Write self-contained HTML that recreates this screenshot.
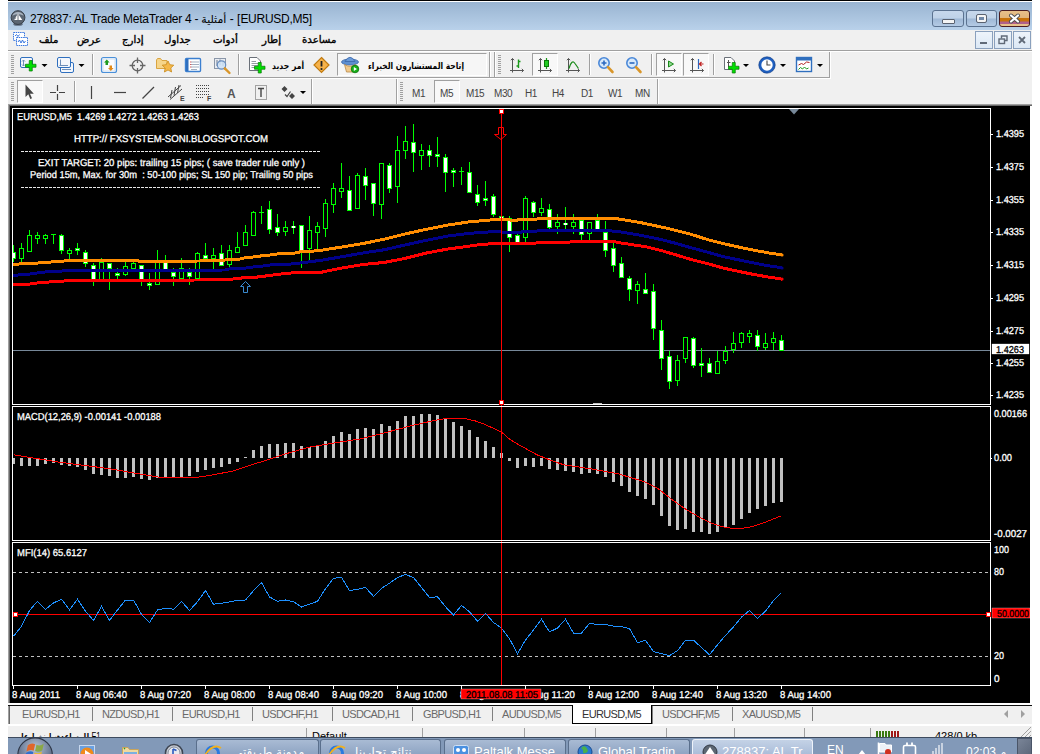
<!DOCTYPE html>
<html><head><meta charset="utf-8"><title>MetaTrader</title>
<style>
html,body{margin:0;padding:0;background:#fff}
body{width:1040px;height:754px;overflow:hidden;position:relative;font-family:"Liberation Sans","DejaVu Sans",sans-serif;font-size:12px}
.a{position:absolute}
.tb{position:absolute;left:8px;width:1024px;background:#f0f0f0}
.sep{position:absolute;width:1px;background:#a0a0a0}
.sep:after{content:"";position:absolute;left:1px;top:0;width:1px;height:100%;background:#fff}
.grip{position:absolute;width:3px;background:repeating-linear-gradient(to bottom,#a0a0a0 0,#a0a0a0 1px,transparent 1px,transparent 2px)}
.press{position:absolute;background:#f8f8f8;border:1px solid;border-color:#a0a0a0 #fff #fff #a0a0a0;box-sizing:border-box}
.tf{position:absolute;top:87px;font-size:10px;letter-spacing:-0.4px;color:#444;line-height:13px;white-space:nowrap}
.mi{-webkit-text-stroke:0.35px #000;position:absolute;top:33px;font-size:10.2px;line-height:14px;color:#000;white-space:nowrap;font-family:"DejaVu Sans","Liberation Sans",sans-serif}
.tab{position:absolute;top:708px;font-size:11px;letter-spacing:-0.65px;line-height:13px;color:#6a6a6a;white-space:nowrap}
.tsep{position:absolute;top:707px;width:1px;height:14px;background:#808080}
.tk{position:absolute;top:740px;height:16px;border:1px solid #5a6f8c;border-bottom:none;border-radius:3px 3px 0 0;background:linear-gradient(#a9bbd4,#8da3c2);box-sizing:border-box;color:#fff;font-size:13px;line-height:24px;white-space:nowrap;overflow:hidden}

</style></head><body>
<div class="a" style="left:8px;top:0;width:1024px;height:1px;background:#000"></div>
<div class="a" style="left:8px;top:2px;width:1024px;height:28px;background:linear-gradient(#99b4d1,#b9d1ea)"></div>
<svg class="a" style="left:10px;top:10px" width="17" height="17" viewBox="0 0 18 18"><ellipse cx="8.5" cy="15" rx="5" ry="1.6" fill="#5d6b7d"/><circle cx="8.5" cy="8" r="7.3" fill="#5c6672" stroke="#333a44" stroke-width="1"/><path d="M2.5,6 A6.5,6.5 0 0 1 14.5,6 Q8.5,3 2.5,6Z" fill="#aab4c0"/><path d="M8.5,4 L13,10.5 H4 Z" fill="#fff"/><path d="M6.5,8 L4.2,10 M8.5,5 V11" stroke="#5c6672" stroke-width="1" fill="none"/></svg>
<div class="a" id="title" style="left:30px;top:11px;font-size:12px;line-height:16px;color:#000;white-space:nowrap;letter-spacing:-0.27px">278837: AL Trade MetaTrader 4 - <span style="font-family:'DejaVu Sans',sans-serif;font-size:11px">أمثلية</span> - [EURUSD,M5]</div>
<!-- caption buttons -->
<div class="a" style="left:932px;top:10px;width:32px;height:17px;border:1px solid #5b7290;border-radius:3px;box-sizing:border-box;background:linear-gradient(#c7d8ec 0,#bfd2e8 48%,#9fb8d6 52%,#b4cae4 100%)"><div class="a" style="left:9px;top:8px;width:11px;height:3px;background:#f4f4f4;border:1px solid #5a6270;border-radius:1px"></div></div>
<div class="a" style="left:966px;top:10px;width:31px;height:17px;border:1px solid #5b7290;border-radius:3px;box-sizing:border-box;background:linear-gradient(#c7d8ec 0,#bfd2e8 48%,#9fb8d6 52%,#b4cae4 100%)"><div class="a" style="left:10px;top:4px;width:5px;height:3px;background:#7088a8;border:2px solid #f4f4f4;outline:1px solid #5a6270;border-radius:1px"></div></div>
<div class="a" style="left:999px;top:10px;width:31px;height:17px;border:1px solid #4a1d22;border-radius:3px;box-sizing:border-box;background:linear-gradient(#e8c08a 0,#e2b57c 45%,#c8720a 48%,#c8720a 68%,#b0608a 72%,#b0608a 86%,#e8c08a 90%)"><svg class="a" style="left:8px;top:2px" width="13" height="11" viewBox="0 0 13 11"><path d="M3,2.5 L10,8.5 M10,2.5 L3,8.5" stroke="#4a4a50" stroke-width="4" stroke-linecap="round"/><path d="M3,2.5 L10,8.5 M10,2.5 L3,8.5" stroke="#fff" stroke-width="2.2" stroke-linecap="round"/></svg></div>
<!-- menu bar -->
<div class="tb" style="top:30px;height:20px"></div>
<svg class="a" style="left:12px;top:31px" width="18" height="16" viewBox="0 0 18 16"><rect x="1.5" y="1.5" width="11" height="8" fill="#fff" stroke="#3b78e0" stroke-dasharray="1.5,0.7"/><rect x="4.5" y="6.5" width="11" height="8" fill="#fff" stroke="#3b78e0" stroke-dasharray="1.5,0.7"/><path d="M6,11 l1.5,-2 1.5,3 1.5,-3 1.5,3 1.5,-2" stroke="#3b78e0" fill="none" stroke-width="1"/><path d="M3,5 l1.5,-1.5 1.5,2 1.5,-2" stroke="#3b78e0" fill="none" stroke-width="1"/></svg>
<div class="mi" style="left:39px">ملف</div>
<div class="mi" style="left:77px">عرض</div>
<div class="mi" style="left:122px">إدارج</div>
<div class="mi" style="left:164px">جداول</div>
<div class="mi" style="left:213px">أدوات</div>
<div class="mi" style="left:262px">إطار</div>
<div class="mi" style="left:302px">مساعدة</div>
<!-- MDI buttons -->
<div class="a" style="left:975px;top:31px;width:18px;height:18px;box-sizing:border-box;border:1px solid #8aa0bd;background:linear-gradient(#eef4fb,#dce8f5)"><div class="a" style="left:4px;top:10px;width:7px;height:2px;background:#606a78"></div></div>
<div class="a" style="left:994px;top:31px;width:18px;height:18px;box-sizing:border-box;border:1px solid #8aa0bd;background:linear-gradient(#eef4fb,#dce8f5)"><svg class="a" style="left:3px;top:3px" width="10" height="10" viewBox="0 0 10 10"><path d="M3.5,3.5 V1 H9 V5.5 H7" stroke="#606a78" fill="none" stroke-width="1.4"/><rect x="1" y="4" width="5.5" height="4.5" fill="none" stroke="#606a78" stroke-width="1.4"/></svg></div>
<div class="a" style="left:1013px;top:31px;width:18px;height:18px;box-sizing:border-box;border:1px solid #8aa0bd;background:linear-gradient(#eef4fb,#dce8f5)"><svg class="a" style="left:4px;top:4px" width="8" height="8" viewBox="0 0 8 8"><path d="M1,1 L7,7 M7,1 L1,7" stroke="#606a78" stroke-width="1.8"/></svg></div>
<!-- toolbars -->
<div class="a" style="left:8px;top:50px;width:1024px;height:1px;background:#a0a0a0"></div>
<div class="a" style="left:8px;top:51px;width:1024px;height:1px;background:#fff"></div>
<div class="tb" style="top:52px;height:27px"></div>
<div class="a" style="left:8px;top:77px;width:822px;height:1px;background:#a0a0a0"></div>
<div class="a" style="left:8px;top:78px;width:823px;height:1px;background:#fff"></div>
<div class="tb" style="top:79px;height:25px"></div>
<div class="a" style="left:8px;top:104px;width:1024px;height:1px;background:#a0a0a0"></div>
<div class="a" style="left:8px;top:105px;width:1024px;height:1px;background:#696969"></div>
<div class="a" style="left:8px;top:104px;width:1px;height:599px;background:#a0a0a0"></div>
<div class="a" style="left:9px;top:105px;width:1px;height:598px;background:#696969"></div>
<div class="grip" style="left:11px;top:55px;height:20px"></div>
<div class="grip" style="left:11px;top:82px;height:20px"></div>
<div class="grip" style="left:498px;top:55px;height:20px"></div>
<div class="grip" style="left:400px;top:82px;height:20px"></div>
<div class="sep" style="left:92px;top:54px;height:21px"></div>
<div class="sep" style="left:238px;top:54px;height:21px"></div>
<div class="sep" style="left:489px;top:52px;height:25px"></div>
<div class="sep" style="left:494px;top:52px;height:25px"></div>
<div class="sep" style="left:589px;top:54px;height:21px"></div>
<div class="sep" style="left:651px;top:54px;height:21px"></div>
<div class="sep" style="left:713px;top:54px;height:21px"></div>
<div class="sep" style="left:829px;top:52px;height:26px"></div>
<div class="sep" style="left:74px;top:81px;height:21px"></div>
<div class="sep" style="left:311px;top:79px;height:25px"></div>
<div class="sep" style="left:396px;top:79px;height:25px"></div>
<div class="sep" style="left:657px;top:79px;height:25px"></div>
<div class="press" style="left:337px;top:53px;width:150px;height:23px;background:#f6f6f6"></div>
<div class="press" style="left:532px;top:53px;width:26px;height:23px"></div>
<div class="press" style="left:656px;top:53px;width:26px;height:23px"></div>
<div class="press" style="left:683px;top:53px;width:26px;height:23px"></div>
<div class="press" style="left:17px;top:80px;width:26px;height:23px"></div>
<div class="press" style="left:434px;top:80px;width:26px;height:23px"></div>
<div class="tf" style="left:412px">M1</div>
<div class="tf" style="left:440px">M5</div>
<div class="tf" style="left:466px">M15</div>
<div class="tf" style="left:494px">M30</div>
<div class="tf" style="left:525px">H1</div>
<div class="tf" style="left:552px">H4</div>
<div class="tf" style="left:581px">D1</div>
<div class="tf" style="left:608px">W1</div>
<div class="tf" style="left:635px">MN</div>
<svg class="a" style="left:0;top:50px" width="1040" height="56" viewBox="0 50 1040 56">
<defs>
<g id="dd"><path d="M0,0 H6 L3,3 Z" fill="#000"/></g>
<g id="plus"><path d="M5,0 H9 V5 H14 V9 H9 V14 H5 V9 H0 V5 H5 Z" fill="#00e000" stroke="#0a7a0a" stroke-width="1"/></g>
</defs>
<!-- toolbar 1 -->
<g>
<rect x="20.5" y="57.5" width="12" height="10" rx="1.5" fill="#f4f7fc" stroke="#2f6fbe"/>
<path d="M23.5,60 V66 M22,61.5 L23.5,60 L25,61.5 M22,64.5 L23.5,66 L25,64.5" stroke="#6f8fb8" fill="none"/>
<use href="#plus" transform="translate(25.5 60.5) scale(0.75)"/>
<use href="#dd" x="41.5" y="64"/>
<rect x="60.500" y="62.5" width="13" height="10" rx="1.5" fill="#f4f7fc" stroke="#2f6fbe"/>
<rect x="57.5" y="57.500" width="13" height="10" rx="1.500" fill="#f4f7fc" stroke="#2f6fbe"/>
<path d="M60.500,59.500 V65 M59.500,65.500 H68 M62,69.500 H71" stroke="#6f8fb8" fill="none"/>
<use href="#dd" x="78.500" y="64"/>
<!-- market watch -->
<rect x="101.500" y="57.500" width="15" height="15" rx="2" fill="#eef3fa" stroke="#4a90d9" stroke-width="1.200"/>
<rect x="103" y="59" width="12" height="12" fill="#fbfcfe" stroke="#c5d9f0" stroke-width="0.800"/>
<path d="M105.500,65 V62.500 H104 L106.800,59.500 L109.600,62.500 H108 V65 Z" fill="#1f9a1f"/>
<path d="M109.500,65.500 V68 H108 L110.800,71 L113.600,68 H112 V65.500 Z" fill="#e08a1a"/>
<!-- crosshair circle -->
<circle cx="137.500" cy="65.500" r="5.300" fill="none" stroke="#666" stroke-width="1.300"/>
<path d="M137.500,57.500 V63 M137.500,68 V73.500 M129.500,65.500 H135 M140,65.500 H145.500" stroke="#666" stroke-width="1.300"/>
<!-- folder star -->
<path d="M156.500,60 V68.500 H167 V60.500 H162 L160.500,58.500 H157.500 Z" fill="#f6d58a" stroke="#d9a441"/>
<path d="M168,61 l1.800,3.700 4,0.500 -3,2.800 0.800,4 -3.600,-2 -3.600,2 0.800,-4 -3,-2.800 4,-0.500 Z" fill="#f4b84a" stroke="#c98a1c" stroke-width="0.800"/>
<!-- terminal -->
<rect x="185.500" y="58.500" width="15" height="13" rx="1" fill="#fff" stroke="#3b7fd0" stroke-width="1.400"/>
<rect x="186" y="59" width="2.500" height="12" fill="#2f6fbe"/>
<path d="M191,62 H199 M191,64.500 H199 M191,67 H199 M191,69.500 H197" stroke="#8a9ab0" stroke-width="0.800"/>
<path d="M190.200,62 h1 M190.200,64.500 h1 M190.200,67 h1" stroke="#d03030" stroke-width="1"/>
<!-- strategy tester: chart + magnifier -->
<rect x="214.500" y="58.500" width="11" height="10" fill="#e8ecf2" stroke="#8a96a8"/>
<path d="M217,60 V66 M220,59.500 V65 M223,61 V66" stroke="#6a7890"/>
<circle cx="221.500" cy="65" r="4.200" fill="#cfe3f7" fill-opacity="0.850" stroke="#6a8fc0" stroke-width="1.200"/>
<path d="M224.800,68.300 L229.500,73" stroke="#d9962a" stroke-width="2.400" stroke-linecap="round"/>
<!-- new order -->
<path d="M249.500,57.500 H257 L260.500,61 V70.500 H249.500 Z" fill="#fff" stroke="#6a7078"/>
<path d="M251.500,61.500 H256 M251.500,63.500 H258 M251.500,65.500 H258 M251.500,67.500 H255" stroke="#8a9098" stroke-width="0.900"/>
<use href="#plus" transform="translate(254.5 62.5) scale(0.75)"/>
<!-- warning diamond -->
<path d="M321.500,57.500 L329,65 L321.500,72.500 L314,65 Z" fill="#f6b24a" stroke="#c07a10" stroke-width="1.200"/>
<path d="M321.500,61 V66.500" stroke="#222" stroke-width="1.800"/><circle cx="321.500" cy="69" r="1.100" fill="#222"/>
<!-- expert hat -->
<ellipse cx="350" cy="62" rx="8.500" ry="3" fill="#5e8fd0" stroke="#3a66a8" stroke-width="0.800"/>
<path d="M345,61.500 Q350,53 355,61.500 Z" fill="#6a9ad8" stroke="#3a66a8" stroke-width="0.800"/>
<path d="M344.500,64.500 Q350,68 355.500,64.500 L353.500,72 H346.500 Z" fill="#f2c98a" stroke="#b88a4a" stroke-width="0.800"/>
<circle cx="355" cy="69" r="3.800" fill="#18b018" stroke="#0a700a" stroke-width="0.800"/><path d="M353.800,67 V71 L357,69 Z" fill="#fff"/>
<!-- bar chart -->
<g stroke="#555" stroke-width="1" fill="none">
<path d="M512.500,58.500 V72.500 M510,70.500 H523.500"/><path d="M510.800,60.200 L512.500,58.500 L514.200,60.200 M521.800,68.800 L523.500,70.500 L521.800,72.200"/>
<path d="M540.500,58.500 V72.500 M538,70.500 H551.500"/><path d="M538.800,60.200 L540.500,58.500 L542.200,60.200 M549.800,68.800 L551.500,70.500 L549.800,72.200"/>
<path d="M568.500,58.500 V72.500 M566,70.500 H579.500"/><path d="M566.800,60.200 L568.500,58.500 L570.200,60.200 M577.800,68.800 L579.500,70.500 L577.800,72.200"/>
<path d="M664.500,58.500 V72.500 M662,70.500 H675.500"/><path d="M662.800,60.200 L664.500,58.500 L666.200,60.200 M673.800,68.800 L675.500,70.500 L673.800,72.200"/>
<path d="M692.500,58.500 V72.500 M690,70.500 H703.500"/><path d="M690.800,60.200 L692.500,58.500 L694.200,60.200 M701.800,68.800 L703.500,70.500 L701.800,72.200"/>
</g>
<path d="M518.500,59.500 V68 M516.500,66 H518.500 M518.500,61.500 H520.500" stroke="#1a9a1a" stroke-width="1.400" fill="none"/>
<path d="M546.500,58 V69" stroke="#1a9a1a" stroke-width="1.200"/><rect x="544.500" y="60.500" width="4" height="6" fill="#22cc22" stroke="#0a7a0a"/>
<path d="M569,68.500 Q572,58.500 575,63.500 L578.500,68.500" stroke="#1a8a1a" stroke-width="1.200" fill="none"/>
<!-- zoom in/out -->
<circle cx="604" cy="63" r="5.200" fill="#d8e9fa" stroke="#4a88d8" stroke-width="1.600"/><path d="M601.500,63 H606.500 M604,60.500 V65.500" stroke="#2a68c0" stroke-width="1.600"/><path d="M608,67.200 L612.500,72" stroke="#d9962a" stroke-width="2.600" stroke-linecap="round"/>
<circle cx="632" cy="63" r="5.200" fill="#d8e9fa" stroke="#4a88d8" stroke-width="1.600"/><path d="M629.500,63 H634.500" stroke="#2a68c0" stroke-width="1.600"/><path d="M636,67.200 L640.500,72" stroke="#d9962a" stroke-width="2.600" stroke-linecap="round"/>
<!-- autoscroll / shift -->
<path d="M668.500,61 V67 L673.500,64 Z" fill="#8fd88f" stroke="#1a8a1a"/>
<path d="M698.500,59 V69" stroke="#2a68c0" stroke-width="1.200"/><path d="M703.500,64 H699.500 M701.500,62 L699.500,64 L701.500,66" stroke="#c02020" stroke-width="1.200" fill="none"/>
<!-- indicators -->
<path d="M724.500,57.500 H731 L734.500,61 V69.500 H724.500 Z" fill="#fff" stroke="#6a7078"/><path d="M728.500,60 V67 M727,62.500 H730.500" stroke="#555" stroke-width="1"/>
<use href="#plus" transform="translate(728.5 62.5) scale(0.75)"/>
<use href="#dd" x="743" y="64"/>
<!-- clock -->
<circle cx="767" cy="65" r="7" fill="#fff" stroke="#1e5fc0" stroke-width="2.600"/><circle cx="767" cy="65" r="8.200" fill="none" stroke="#123a80" stroke-width="0.600"/><path d="M767,60.500 V65 H770.500" stroke="#444" stroke-width="1.100" fill="none"/>
<use href="#dd" x="780" y="64"/>
<!-- templates -->
<rect x="796.500" y="57.500" width="15" height="14" fill="#fff" stroke="#2f6fbe" stroke-width="1.400"/><rect x="797" y="58" width="14" height="2.500" fill="#2f6fbe"/>
<path d="M798.500,65 l3,-1.500 2,1 3,-2.500 3,0.500" stroke="#b02020" fill="none"/><path d="M798.500,69.500 l2,-2 2,1.500 2,-2 2,2 2,-1" stroke="#1a9a1a" fill="none"/>
<use href="#dd" x="817" y="64"/>
</g>
<!-- toolbar 2 -->
<g>
<path d="M25.500,84.500 V97 L28.300,94.300 L30.300,99 L32,98.200 L30,93.700 H33.800 Z" fill="#444"/>
<path d="M50,92.500 H56 M59,92.500 H65 M57.500,85 V91 M57.500,94 V100" stroke="#444" stroke-width="1.200"/>
<path d="M91.500,86 V99" stroke="#444" stroke-width="1.200"/>
<path d="M114,92.500 H126" stroke="#444" stroke-width="1.200"/>
<path d="M142.500,98.500 L154,87" stroke="#444" stroke-width="1.200"/>
<path d="M168,97 L181,85.500 M170,99.500 L182,89 M172,90 L170.500,98 M175.500,87 L174,95.500 M179,85 L177.500,93" stroke="#444" stroke-width="1"/>
<path d="M196,85.500 H210 M196,88.500 H210 M196,91.500 H210 M196,94.500 H210 M196,97.500 H204" stroke="#444" stroke-width="1" stroke-dasharray="1,1" shape-rendering="crispEdges"/>
<path d="M255.500,85.500 H266.500 V99.500 H255.500 Z" fill="none" stroke="#555" stroke-dasharray="1,1"/>
<path d="M258,88.500 H264 M261,88.500 V97" stroke="#444" stroke-width="1.400"/>
<path d="M284.500,86 l3,3 -3,3 -3,-3 Z M292,93 l3,3 -3,3 -3,-3 Z" fill="#444"/><path d="M285,94.500 l2,2 3.500,-5" stroke="#444" fill="none" stroke-width="1.200"/>
<use href="#dd" x="300" y="91"/>
</g>
<g font-family="'Liberation Sans',sans-serif" font-weight="bold" fill="#444">
<text x="180" y="101" font-size="7">E</text>
<text x="207" y="101" font-size="7">F</text>
<text x="227" y="97.500" font-size="12" font-weight="bold" fill="#555">A</text>
</g>
<g font-family="'DejaVu Sans','Liberation Sans',sans-serif" font-weight="bold" fill="#000" font-size="9">
<text x="304" y="69" text-anchor="start" direction="rtl" textLength="32" lengthAdjust="spacingAndGlyphs">أمر جديد</text>
<text x="464" y="69" text-anchor="start" direction="rtl" textLength="96" lengthAdjust="spacingAndGlyphs">إتاحة المستشارون الخبراء</text>
</g>
</svg>


<svg style="position:absolute;left:0;top:0" width="1040" height="754" viewBox="0 0 1040 754"><rect x="10" y="106" width="1020" height="597" fill="#000"/>
<rect x="13" y="350" width="977" height="1" fill="#778899" shape-rendering="crispEdges"/>
<clipPath id="cp"><rect x="13" y="109" width="977" height="295"/></clipPath>
<g shape-rendering="crispEdges" clip-path="url(#cp)">
<rect x="13" y="245" width="1" height="17" fill="#00ff00"/><rect x="11" y="252" width="5" height="7" fill="#00ff00"/><rect x="12" y="253" width="3" height="5" fill="#fff"/><rect x="21" y="243" width="1" height="21" fill="#00ff00"/><rect x="19" y="248" width="5" height="11" fill="#00ff00"/><rect x="20" y="249" width="3" height="9" fill="#000"/><rect x="29" y="230" width="1" height="22" fill="#00ff00"/><rect x="27" y="235" width="5" height="17" fill="#00ff00"/><rect x="28" y="236" width="3" height="15" fill="#000"/><rect x="37" y="232" width="1" height="12" fill="#00ff00"/><rect x="35" y="235" width="5" height="4" fill="#00ff00"/><rect x="36" y="236" width="3" height="2" fill="#000"/><rect x="45" y="234" width="1" height="10" fill="#00ff00"/><rect x="43" y="235" width="5" height="4" fill="#00ff00"/><rect x="44" y="236" width="3" height="2" fill="#000"/><rect x="53" y="234" width="1" height="10" fill="#00ff00"/><rect x="51" y="234" width="5" height="1" fill="#00ff00"/><rect x="61" y="234" width="1" height="20" fill="#00ff00"/><rect x="59" y="235" width="5" height="16" fill="#00ff00"/><rect x="60" y="236" width="3" height="14" fill="#fff"/><rect x="69" y="248" width="1" height="12" fill="#00ff00"/><rect x="67" y="250" width="5" height="4" fill="#00ff00"/><rect x="68" y="251" width="3" height="2" fill="#000"/><rect x="77" y="243" width="1" height="12" fill="#00ff00"/><rect x="75" y="248" width="5" height="3" fill="#00ff00"/><rect x="76" y="249" width="3" height="1" fill="#fff"/><rect x="85" y="250" width="1" height="17" fill="#00ff00"/><rect x="83" y="252" width="5" height="12" fill="#00ff00"/><rect x="84" y="253" width="3" height="10" fill="#fff"/><rect x="93" y="263" width="1" height="23" fill="#00ff00"/><rect x="91" y="265" width="5" height="15" fill="#00ff00"/><rect x="92" y="266" width="3" height="13" fill="#fff"/><rect x="101" y="258" width="1" height="22" fill="#00ff00"/><rect x="99" y="262" width="5" height="18" fill="#00ff00"/><rect x="100" y="263" width="3" height="16" fill="#000"/><rect x="109" y="263" width="1" height="27" fill="#00ff00"/><rect x="107" y="263" width="5" height="6" fill="#00ff00"/><rect x="108" y="264" width="3" height="4" fill="#fff"/><rect x="117" y="268" width="1" height="12" fill="#00ff00"/><rect x="115" y="273" width="5" height="3" fill="#00ff00"/><rect x="116" y="274" width="3" height="1" fill="#fff"/><rect x="125" y="262" width="1" height="14" fill="#00ff00"/><rect x="123" y="266" width="5" height="9" fill="#00ff00"/><rect x="124" y="267" width="3" height="7" fill="#000"/><rect x="133" y="262" width="1" height="7" fill="#00ff00"/><rect x="131" y="263" width="5" height="6" fill="#00ff00"/><rect x="132" y="264" width="3" height="4" fill="#000"/><rect x="141" y="265" width="1" height="21" fill="#00ff00"/><rect x="139" y="265" width="5" height="15" fill="#00ff00"/><rect x="140" y="266" width="3" height="13" fill="#fff"/><rect x="149" y="273" width="1" height="17" fill="#00ff00"/><rect x="147" y="283" width="5" height="3" fill="#00ff00"/><rect x="148" y="284" width="3" height="1" fill="#fff"/><rect x="157" y="250" width="1" height="35" fill="#00ff00"/><rect x="155" y="262" width="5" height="23" fill="#00ff00"/><rect x="156" y="263" width="3" height="21" fill="#000"/><rect x="165" y="255" width="1" height="15" fill="#00ff00"/><rect x="163" y="260" width="5" height="10" fill="#00ff00"/><rect x="164" y="261" width="3" height="8" fill="#fff"/><rect x="173" y="268" width="1" height="18" fill="#00ff00"/><rect x="171" y="272" width="5" height="5" fill="#00ff00"/><rect x="172" y="273" width="3" height="3" fill="#fff"/><rect x="181" y="258" width="1" height="21" fill="#00ff00"/><rect x="179" y="268" width="5" height="11" fill="#00ff00"/><rect x="180" y="269" width="3" height="9" fill="#000"/><rect x="189" y="268" width="1" height="17" fill="#00ff00"/><rect x="187" y="272" width="5" height="5" fill="#00ff00"/><rect x="188" y="273" width="3" height="3" fill="#fff"/><rect x="197" y="252" width="1" height="27" fill="#00ff00"/><rect x="195" y="253" width="5" height="26" fill="#00ff00"/><rect x="196" y="254" width="3" height="24" fill="#000"/><rect x="205" y="243" width="1" height="16" fill="#00ff00"/><rect x="203" y="255" width="5" height="4" fill="#00ff00"/><rect x="204" y="256" width="3" height="2" fill="#fff"/><rect x="213" y="248" width="1" height="22" fill="#00ff00"/><rect x="211" y="255" width="5" height="4" fill="#00ff00"/><rect x="212" y="256" width="3" height="2" fill="#000"/><rect x="221" y="245" width="1" height="21" fill="#00ff00"/><rect x="219" y="253" width="5" height="13" fill="#00ff00"/><rect x="220" y="254" width="3" height="11" fill="#fff"/><rect x="229" y="245" width="1" height="22" fill="#00ff00"/><rect x="227" y="250" width="5" height="15" fill="#00ff00"/><rect x="228" y="251" width="3" height="13" fill="#000"/><rect x="237" y="232" width="1" height="21" fill="#00ff00"/><rect x="235" y="247" width="5" height="6" fill="#00ff00"/><rect x="236" y="248" width="3" height="4" fill="#000"/><rect x="245" y="225" width="1" height="21" fill="#00ff00"/><rect x="243" y="232" width="5" height="14" fill="#00ff00"/><rect x="244" y="233" width="3" height="12" fill="#000"/><rect x="253" y="211" width="1" height="25" fill="#00ff00"/><rect x="251" y="212" width="5" height="24" fill="#00ff00"/><rect x="252" y="213" width="3" height="22" fill="#000"/><rect x="261" y="206" width="1" height="18" fill="#00ff00"/><rect x="259" y="212" width="5" height="1" fill="#00ff00"/><rect x="269" y="201" width="1" height="33" fill="#00ff00"/><rect x="267" y="209" width="5" height="21" fill="#00ff00"/><rect x="268" y="210" width="3" height="19" fill="#fff"/><rect x="277" y="214" width="1" height="22" fill="#00ff00"/><rect x="275" y="227" width="5" height="6" fill="#00ff00"/><rect x="276" y="228" width="3" height="4" fill="#fff"/><rect x="285" y="221" width="1" height="15" fill="#00ff00"/><rect x="283" y="227" width="5" height="5" fill="#00ff00"/><rect x="284" y="228" width="3" height="3" fill="#000"/><rect x="293" y="221" width="1" height="13" fill="#00ff00"/><rect x="291" y="226" width="5" height="2" fill="#00ff00"/><rect x="292" y="226" width="3" height="2" fill="#fff"/><rect x="301" y="225" width="1" height="43" fill="#00ff00"/><rect x="299" y="225" width="5" height="28" fill="#00ff00"/><rect x="300" y="226" width="3" height="26" fill="#fff"/><rect x="309" y="216" width="1" height="46" fill="#00ff00"/><rect x="307" y="230" width="5" height="19" fill="#00ff00"/><rect x="308" y="231" width="3" height="17" fill="#000"/><rect x="317" y="222" width="1" height="29" fill="#00ff00"/><rect x="315" y="226" width="5" height="7" fill="#00ff00"/><rect x="316" y="227" width="3" height="5" fill="#000"/><rect x="325" y="199" width="1" height="38" fill="#00ff00"/><rect x="323" y="203" width="5" height="26" fill="#00ff00"/><rect x="324" y="204" width="3" height="24" fill="#000"/><rect x="333" y="183" width="1" height="30" fill="#00ff00"/><rect x="331" y="188" width="5" height="17" fill="#00ff00"/><rect x="332" y="189" width="3" height="15" fill="#000"/><rect x="341" y="163" width="1" height="35" fill="#00ff00"/><rect x="339" y="188" width="5" height="4" fill="#00ff00"/><rect x="340" y="189" width="3" height="2" fill="#000"/><rect x="349" y="176" width="1" height="35" fill="#00ff00"/><rect x="347" y="190" width="5" height="21" fill="#00ff00"/><rect x="348" y="191" width="3" height="19" fill="#fff"/><rect x="357" y="173" width="1" height="36" fill="#00ff00"/><rect x="355" y="175" width="5" height="34" fill="#00ff00"/><rect x="356" y="176" width="3" height="32" fill="#000"/><rect x="365" y="168" width="1" height="32" fill="#00ff00"/><rect x="363" y="176" width="5" height="10" fill="#00ff00"/><rect x="364" y="177" width="3" height="8" fill="#fff"/><rect x="373" y="183" width="1" height="33" fill="#00ff00"/><rect x="371" y="183" width="5" height="21" fill="#00ff00"/><rect x="372" y="184" width="3" height="19" fill="#fff"/><rect x="381" y="163" width="1" height="56" fill="#00ff00"/><rect x="379" y="163" width="5" height="42" fill="#00ff00"/><rect x="380" y="164" width="3" height="40" fill="#000"/><rect x="389" y="163" width="1" height="30" fill="#00ff00"/><rect x="387" y="165" width="5" height="24" fill="#00ff00"/><rect x="388" y="166" width="3" height="22" fill="#fff"/><rect x="397" y="136" width="1" height="67" fill="#00ff00"/><rect x="395" y="150" width="5" height="37" fill="#00ff00"/><rect x="396" y="151" width="3" height="35" fill="#000"/><rect x="405" y="126" width="1" height="33" fill="#00ff00"/><rect x="403" y="141" width="5" height="10" fill="#00ff00"/><rect x="404" y="142" width="3" height="8" fill="#000"/><rect x="413" y="124" width="1" height="48" fill="#00ff00"/><rect x="411" y="142" width="5" height="11" fill="#00ff00"/><rect x="412" y="143" width="3" height="9" fill="#fff"/><rect x="421" y="144" width="1" height="26" fill="#00ff00"/><rect x="419" y="150" width="5" height="6" fill="#00ff00"/><rect x="420" y="151" width="3" height="4" fill="#000"/><rect x="429" y="145" width="1" height="22" fill="#00ff00"/><rect x="427" y="150" width="5" height="6" fill="#00ff00"/><rect x="428" y="151" width="3" height="4" fill="#fff"/><rect x="437" y="137" width="1" height="30" fill="#00ff00"/><rect x="435" y="154" width="5" height="3" fill="#00ff00"/><rect x="436" y="155" width="3" height="1" fill="#fff"/><rect x="445" y="154" width="1" height="38" fill="#00ff00"/><rect x="443" y="157" width="5" height="16" fill="#00ff00"/><rect x="444" y="158" width="3" height="14" fill="#fff"/><rect x="453" y="168" width="1" height="19" fill="#00ff00"/><rect x="451" y="170" width="5" height="3" fill="#00ff00"/><rect x="452" y="171" width="3" height="1" fill="#fff"/><rect x="461" y="167" width="1" height="18" fill="#00ff00"/><rect x="459" y="171" width="5" height="1" fill="#00ff00"/><rect x="469" y="162" width="1" height="31" fill="#00ff00"/><rect x="467" y="172" width="5" height="21" fill="#00ff00"/><rect x="468" y="173" width="3" height="19" fill="#fff"/><rect x="477" y="185" width="1" height="21" fill="#00ff00"/><rect x="475" y="194" width="5" height="9" fill="#00ff00"/><rect x="476" y="195" width="3" height="7" fill="#fff"/><rect x="485" y="181" width="1" height="25" fill="#00ff00"/><rect x="483" y="198" width="5" height="3" fill="#00ff00"/><rect x="484" y="199" width="3" height="1" fill="#fff"/><rect x="493" y="194" width="1" height="23" fill="#00ff00"/><rect x="491" y="196" width="5" height="19" fill="#00ff00"/><rect x="492" y="197" width="3" height="17" fill="#fff"/><rect x="501" y="215" width="1" height="8" fill="#00ff00"/><rect x="499" y="216" width="5" height="5" fill="#00ff00"/><rect x="500" y="217" width="3" height="3" fill="#fff"/><rect x="509" y="216" width="1" height="36" fill="#00ff00"/><rect x="507" y="218" width="5" height="20" fill="#00ff00"/><rect x="508" y="219" width="3" height="18" fill="#fff"/><rect x="517" y="234" width="1" height="10" fill="#00ff00"/><rect x="515" y="235" width="5" height="9" fill="#00ff00"/><rect x="516" y="236" width="3" height="7" fill="#fff"/><rect x="525" y="196" width="1" height="47" fill="#00ff00"/><rect x="523" y="198" width="5" height="40" fill="#00ff00"/><rect x="524" y="199" width="3" height="38" fill="#000"/><rect x="533" y="201" width="1" height="16" fill="#00ff00"/><rect x="531" y="202" width="5" height="11" fill="#00ff00"/><rect x="532" y="203" width="3" height="9" fill="#fff"/><rect x="541" y="198" width="1" height="18" fill="#00ff00"/><rect x="539" y="208" width="5" height="5" fill="#00ff00"/><rect x="540" y="209" width="3" height="3" fill="#000"/><rect x="549" y="204" width="1" height="26" fill="#00ff00"/><rect x="547" y="209" width="5" height="19" fill="#00ff00"/><rect x="548" y="210" width="3" height="17" fill="#fff"/><rect x="557" y="214" width="1" height="20" fill="#00ff00"/><rect x="555" y="222" width="5" height="5" fill="#00ff00"/><rect x="556" y="223" width="3" height="3" fill="#000"/><rect x="565" y="207" width="1" height="22" fill="#00ff00"/><rect x="563" y="223" width="5" height="2" fill="#00ff00"/><rect x="564" y="223" width="3" height="2" fill="#fff"/><rect x="573" y="214" width="1" height="20" fill="#00ff00"/><rect x="571" y="222" width="5" height="5" fill="#00ff00"/><rect x="572" y="223" width="3" height="3" fill="#000"/><rect x="581" y="220" width="1" height="21" fill="#00ff00"/><rect x="579" y="220" width="5" height="15" fill="#00ff00"/><rect x="580" y="221" width="3" height="13" fill="#fff"/><rect x="589" y="222" width="1" height="19" fill="#00ff00"/><rect x="587" y="222" width="5" height="12" fill="#00ff00"/><rect x="588" y="223" width="3" height="10" fill="#000"/><rect x="597" y="214" width="1" height="16" fill="#00ff00"/><rect x="595" y="220" width="5" height="10" fill="#00ff00"/><rect x="596" y="221" width="3" height="8" fill="#fff"/><rect x="605" y="221" width="1" height="36" fill="#00ff00"/><rect x="603" y="232" width="5" height="19" fill="#00ff00"/><rect x="604" y="233" width="3" height="17" fill="#fff"/><rect x="613" y="240" width="1" height="32" fill="#00ff00"/><rect x="611" y="248" width="5" height="18" fill="#00ff00"/><rect x="612" y="249" width="3" height="16" fill="#fff"/><rect x="621" y="257" width="1" height="21" fill="#00ff00"/><rect x="619" y="263" width="5" height="15" fill="#00ff00"/><rect x="620" y="264" width="3" height="13" fill="#fff"/><rect x="629" y="276" width="1" height="25" fill="#00ff00"/><rect x="627" y="278" width="5" height="12" fill="#00ff00"/><rect x="628" y="279" width="3" height="10" fill="#fff"/><rect x="637" y="281" width="1" height="23" fill="#00ff00"/><rect x="635" y="284" width="5" height="7" fill="#00ff00"/><rect x="636" y="285" width="3" height="5" fill="#000"/><rect x="645" y="273" width="1" height="21" fill="#00ff00"/><rect x="643" y="289" width="5" height="5" fill="#00ff00"/><rect x="644" y="290" width="3" height="3" fill="#fff"/><rect x="653" y="284" width="1" height="56" fill="#00ff00"/><rect x="651" y="291" width="5" height="38" fill="#00ff00"/><rect x="652" y="292" width="3" height="36" fill="#fff"/><rect x="661" y="320" width="1" height="50" fill="#00ff00"/><rect x="659" y="330" width="5" height="29" fill="#00ff00"/><rect x="660" y="331" width="3" height="27" fill="#fff"/><rect x="669" y="351" width="1" height="38" fill="#00ff00"/><rect x="667" y="356" width="5" height="26" fill="#00ff00"/><rect x="668" y="357" width="3" height="24" fill="#fff"/><rect x="677" y="355" width="1" height="31" fill="#00ff00"/><rect x="675" y="360" width="5" height="21" fill="#00ff00"/><rect x="676" y="361" width="3" height="19" fill="#000"/><rect x="685" y="337" width="1" height="26" fill="#00ff00"/><rect x="683" y="337" width="5" height="22" fill="#00ff00"/><rect x="684" y="338" width="3" height="20" fill="#000"/><rect x="693" y="337" width="1" height="31" fill="#00ff00"/><rect x="691" y="338" width="5" height="28" fill="#00ff00"/><rect x="692" y="339" width="3" height="26" fill="#fff"/><rect x="701" y="348" width="1" height="29" fill="#00ff00"/><rect x="699" y="363" width="5" height="3" fill="#00ff00"/><rect x="700" y="364" width="3" height="1" fill="#fff"/><rect x="709" y="358" width="1" height="15" fill="#00ff00"/><rect x="707" y="363" width="5" height="10" fill="#00ff00"/><rect x="708" y="364" width="3" height="8" fill="#fff"/><rect x="717" y="351" width="1" height="23" fill="#00ff00"/><rect x="715" y="361" width="5" height="13" fill="#00ff00"/><rect x="716" y="362" width="3" height="11" fill="#000"/><rect x="725" y="346" width="1" height="18" fill="#00ff00"/><rect x="723" y="351" width="5" height="10" fill="#00ff00"/><rect x="724" y="352" width="3" height="8" fill="#000"/><rect x="733" y="332" width="1" height="21" fill="#00ff00"/><rect x="731" y="343" width="5" height="7" fill="#00ff00"/><rect x="732" y="344" width="3" height="5" fill="#000"/><rect x="741" y="332" width="1" height="16" fill="#00ff00"/><rect x="739" y="333" width="5" height="10" fill="#00ff00"/><rect x="740" y="334" width="3" height="8" fill="#000"/><rect x="749" y="330" width="1" height="13" fill="#00ff00"/><rect x="747" y="333" width="5" height="4" fill="#00ff00"/><rect x="748" y="334" width="3" height="2" fill="#000"/><rect x="757" y="330" width="1" height="21" fill="#00ff00"/><rect x="755" y="335" width="5" height="12" fill="#00ff00"/><rect x="756" y="336" width="3" height="10" fill="#fff"/><rect x="765" y="333" width="1" height="17" fill="#00ff00"/><rect x="763" y="343" width="5" height="5" fill="#00ff00"/><rect x="764" y="344" width="3" height="3" fill="#000"/><rect x="773" y="332" width="1" height="18" fill="#00ff00"/><rect x="771" y="338" width="5" height="5" fill="#00ff00"/><rect x="772" y="339" width="3" height="3" fill="#000"/><rect x="781" y="335" width="1" height="16" fill="#00ff00"/><rect x="779" y="340" width="5" height="11" fill="#00ff00"/><rect x="780" y="341" width="3" height="9" fill="#fff"/>
</g>
<g shape-rendering="crispEdges">
<polyline points="13,285 28,284.3 40,282.6 57,281.5 74,280.3 200,280 205,279.2 232,279.2 236,278.5 240,278.5 243,277.4 256,277.4 260,276.2 265,276.2 268,275 273,275 276,274.3 280,274.3 283,273.4 290,273.4 293,272.3 321,272.3 342,268 363.5,264.5 384.6,262.4 405.8,258.2 427,252.9 448,249 469,246.2 479.4,244.6 495,243.5 501,243 536,243 540,242.3 568,242.3 571,241.8 615,241.8 620,242.8 631,244.5 646,246.8 661.5,250.6 677,255.2 692,259.8 707.7,263.7 723,268 738.5,271.4 754,274.5 768,277 782,279.1" fill="none" stroke="#ff0000" stroke-width="3"/>
<polyline points="13,275.4 28,274.3 40,272.6 50,271.5 74,270.5 160,270.3 225,270 230,268.8 240,268.8 245,268.2 253,267 262,266.2 270,265 278,264.2 290,264.2 295,263 300,263 321,260.3 342,256.7 363.5,252.9 384.6,249.7 405.8,244.8 427,240.2 448,236 469,233.4 479,232.6 495,231.5 503,232.2 521,232.2 524,231.2 536,231.2 540,230.3 608,230.3 612,231 622.5,232.2 641.5,235.5 661.5,239.6 677,243.7 692,248 707.7,252.2 723,256.6 738.5,259.8 753.8,263 768,265.7 782,267.8" fill="none" stroke="#00008b" stroke-width="3"/>
<polyline points="13,264.3 42,262.8 57,261.5 74,260.3 137,260.3 140,261.5 160,261.2 200,261 205,260 225,260 230,259 240,259 245,257.7 253,257 262,255.8 270,255 278,253.8 290,253.8 295,253 300,251.9 312,251.2 321,250.3 342,247 363.5,243.4 384.6,239.1 405.8,233.8 427,229.2 448,225 469,221.9 490,220 501,219.5 515,220.3 522,219.5 536,219.2 540,218.5 616,218.5 620,219.3 630,220.8 640,222.5 652,225 667.6,228.4 690,234 707.7,239.6 723,243.5 738.5,247 753.8,250.2 768,252.8 782,255" fill="none" stroke="#ff8c00" stroke-width="3"/>
</g>
<g shape-rendering="crispEdges"><rect x="12" y="458" width="3" height="6" fill="#c0c0c0"/><rect x="20" y="458" width="3" height="8" fill="#c0c0c0"/><rect x="28" y="458" width="3" height="8" fill="#c0c0c0"/><rect x="36" y="458" width="3" height="8" fill="#c0c0c0"/><rect x="44" y="458" width="3" height="6" fill="#c0c0c0"/><rect x="52" y="458" width="3" height="5" fill="#c0c0c0"/><rect x="60" y="458" width="3" height="7" fill="#c0c0c0"/><rect x="68" y="458" width="3" height="8" fill="#c0c0c0"/><rect x="76" y="458" width="3" height="9" fill="#c0c0c0"/><rect x="84" y="458" width="3" height="12" fill="#c0c0c0"/><rect x="92" y="458" width="3" height="16" fill="#c0c0c0"/><rect x="100" y="458" width="3" height="17" fill="#c0c0c0"/><rect x="108" y="458" width="3" height="18" fill="#c0c0c0"/><rect x="116" y="458" width="3" height="20" fill="#c0c0c0"/><rect x="124" y="458" width="3" height="20" fill="#c0c0c0"/><rect x="132" y="458" width="3" height="19" fill="#c0c0c0"/><rect x="140" y="458" width="3" height="21" fill="#c0c0c0"/><rect x="148" y="458" width="3" height="22" fill="#c0c0c0"/><rect x="156" y="458" width="3" height="20" fill="#c0c0c0"/><rect x="164" y="458" width="3" height="20" fill="#c0c0c0"/><rect x="172" y="458" width="3" height="19" fill="#c0c0c0"/><rect x="180" y="458" width="3" height="19" fill="#c0c0c0"/><rect x="188" y="458" width="3" height="18" fill="#c0c0c0"/><rect x="196" y="458" width="3" height="14" fill="#c0c0c0"/><rect x="204" y="458" width="3" height="12" fill="#c0c0c0"/><rect x="212" y="458" width="3" height="10" fill="#c0c0c0"/><rect x="220" y="458" width="3" height="9" fill="#c0c0c0"/><rect x="228" y="458" width="3" height="6" fill="#c0c0c0"/><rect x="236" y="458" width="3" height="4" fill="#c0c0c0"/><rect x="244" y="457" width="3" height="1" fill="#c0c0c0"/><rect x="252" y="450" width="3" height="8" fill="#c0c0c0"/><rect x="260" y="446" width="3" height="12" fill="#c0c0c0"/><rect x="268" y="444" width="3" height="14" fill="#c0c0c0"/><rect x="276" y="444" width="3" height="14" fill="#c0c0c0"/><rect x="284" y="443" width="3" height="15" fill="#c0c0c0"/><rect x="292" y="443" width="3" height="15" fill="#c0c0c0"/><rect x="300" y="446" width="3" height="12" fill="#c0c0c0"/><rect x="308" y="447" width="3" height="11" fill="#c0c0c0"/><rect x="316" y="446" width="3" height="12" fill="#c0c0c0"/><rect x="324" y="441" width="3" height="17" fill="#c0c0c0"/><rect x="332" y="436" width="3" height="22" fill="#c0c0c0"/><rect x="340" y="432" width="3" height="26" fill="#c0c0c0"/><rect x="348" y="434" width="3" height="24" fill="#c0c0c0"/><rect x="356" y="429" width="3" height="29" fill="#c0c0c0"/><rect x="364" y="428" width="3" height="30" fill="#c0c0c0"/><rect x="372" y="429" width="3" height="29" fill="#c0c0c0"/><rect x="380" y="424" width="3" height="34" fill="#c0c0c0"/><rect x="388" y="426" width="3" height="32" fill="#c0c0c0"/><rect x="396" y="421" width="3" height="37" fill="#c0c0c0"/><rect x="404" y="416" width="3" height="42" fill="#c0c0c0"/><rect x="412" y="416" width="3" height="42" fill="#c0c0c0"/><rect x="420" y="414" width="3" height="44" fill="#c0c0c0"/><rect x="428" y="414" width="3" height="44" fill="#c0c0c0"/><rect x="436" y="415" width="3" height="43" fill="#c0c0c0"/><rect x="444" y="419" width="3" height="39" fill="#c0c0c0"/><rect x="452" y="422" width="3" height="36" fill="#c0c0c0"/><rect x="460" y="426" width="3" height="32" fill="#c0c0c0"/><rect x="468" y="430" width="3" height="28" fill="#c0c0c0"/><rect x="476" y="437" width="3" height="21" fill="#c0c0c0"/><rect x="484" y="441" width="3" height="17" fill="#c0c0c0"/><rect x="492" y="447" width="3" height="11" fill="#c0c0c0"/><rect x="500" y="453" width="3" height="5" fill="#c0c0c0"/><rect x="508" y="458" width="3" height="3" fill="#c0c0c0"/><rect x="516" y="458" width="3" height="10" fill="#c0c0c0"/><rect x="524" y="458" width="3" height="8" fill="#c0c0c0"/><rect x="532" y="458" width="3" height="9" fill="#c0c0c0"/><rect x="540" y="458" width="3" height="8" fill="#c0c0c0"/><rect x="548" y="458" width="3" height="11" fill="#c0c0c0"/><rect x="556" y="458" width="3" height="12" fill="#c0c0c0"/><rect x="564" y="458" width="3" height="13" fill="#c0c0c0"/><rect x="572" y="458" width="3" height="14" fill="#c0c0c0"/><rect x="580" y="458" width="3" height="16" fill="#c0c0c0"/><rect x="588" y="458" width="3" height="15" fill="#c0c0c0"/><rect x="596" y="458" width="3" height="16" fill="#c0c0c0"/><rect x="604" y="458" width="3" height="19" fill="#c0c0c0"/><rect x="612" y="458" width="3" height="24" fill="#c0c0c0"/><rect x="620" y="458" width="3" height="28" fill="#c0c0c0"/><rect x="628" y="458" width="3" height="34" fill="#c0c0c0"/><rect x="636" y="458" width="3" height="38" fill="#c0c0c0"/><rect x="644" y="458" width="3" height="41" fill="#c0c0c0"/><rect x="652" y="458" width="3" height="47" fill="#c0c0c0"/><rect x="660" y="458" width="3" height="58" fill="#c0c0c0"/><rect x="668" y="458" width="3" height="68" fill="#c0c0c0"/><rect x="676" y="458" width="3" height="72" fill="#c0c0c0"/><rect x="684" y="458" width="3" height="71" fill="#c0c0c0"/><rect x="692" y="458" width="3" height="74" fill="#c0c0c0"/><rect x="700" y="458" width="3" height="74" fill="#c0c0c0"/><rect x="708" y="458" width="3" height="76" fill="#c0c0c0"/><rect x="716" y="458" width="3" height="74" fill="#c0c0c0"/><rect x="724" y="458" width="3" height="70" fill="#c0c0c0"/><rect x="732" y="458" width="3" height="67" fill="#c0c0c0"/><rect x="740" y="458" width="3" height="61" fill="#c0c0c0"/><rect x="748" y="458" width="3" height="55" fill="#c0c0c0"/><rect x="756" y="458" width="3" height="51" fill="#c0c0c0"/><rect x="764" y="458" width="3" height="48" fill="#c0c0c0"/><rect x="772" y="458" width="3" height="45" fill="#c0c0c0"/><rect x="780" y="458" width="3" height="44" fill="#c0c0c0"/></g>
<polyline points="13.5,454.8 58,462 108,468.5 133,472.8 158,477 163,477.8 193,477.8 208,475.8 233,471 258,462.8 268,459.8 285,454 310,447 335,442.8 360,439 385,432.8 410,426 435,420.3 445,418.6 465,418.6 475,420.8 485,424.5 501.5,432 510,439.5 520,445.4 537,454.8 550.4,460.2 563.8,464.8 590.8,468.8 617.7,473.7 644.6,481.7 658,488.5 671.5,499.2 685,508.7 698.5,516.7 712,523.5 725.4,527.5 738.9,528.9 752.3,526.7 765.8,522 780.6,516" fill="none" stroke="#ff0000" stroke-width="1" shape-rendering="crispEdges"/>
<g shape-rendering="crispEdges">
<line x1="13" y1="572.5" x2="989" y2="572.5" stroke="#c0c0c0" stroke-width="1" stroke-dasharray="3,3"/>
<line x1="13" y1="656.5" x2="989" y2="656.5" stroke="#c0c0c0" stroke-width="1" stroke-dasharray="3,3"/>
<rect x="13" y="614" width="977" height="1" fill="#ff0000"/>
</g>
<polyline points="13.5,636.25 21.5,626.25 29.5,610.5 37.5,601.25 45.5,609.25 53.5,603 61.5,599.25 69.5,610 77.5,599.25 85.5,611.25 93.5,620.5 101.5,606.25 109.5,620.5 117.5,610 125.5,600 133.5,600 141.5,614.5 149.5,622.5 157.5,610 165.5,608.25 173.5,609.25 181.5,601.25 189.5,610.5 197.5,601.75 205.5,590.5 213.5,604.25 221.5,603.25 229.5,602 237.5,600.25 245.5,600 253.5,590.75 261.5,582.5 269.5,597 277.5,601.25 285.5,600 293.5,601.75 301.5,607 309.5,604.25 317.5,601.25 325.5,588.75 333.5,578.25 341.5,577.5 349.5,590.5 357.5,589.25 365.5,587.5 373.5,596.25 381.5,588.25 389.5,583.25 397.5,577.5 405.5,574.5 413.5,577.5 421.5,587.5 429.5,597.5 437.5,596.75 445.5,606.75 453.5,615 461.5,605.5 469.5,611.75 477.5,621.25 485.5,613.25 493.5,622.5 501.5,628 509.5,638.75 517.5,653.75 525.5,640 533.5,630 541.5,619.2 549.5,631.9 557.5,628.1 565.5,619.2 573.5,633.2 581.5,633.2 589.5,623.3 597.5,624.6 605.5,624.6 613.5,626.2 621.5,626.5 629.5,628.7 637.5,642.7 645.5,640.2 653.5,651.5 661.5,653.7 669.5,655.6 677.5,650.7 685.5,640.2 693.5,640.2 701.5,647.5 709.5,654.8 717.5,644.8 725.5,635.4 733.5,626.8 741.5,617.1 749.5,610.4 757.5,618.4 765.5,611.2 773.5,600.4 781.5,592.8" fill="none" stroke="#1e90ff" stroke-width="1" shape-rendering="crispEdges"/>
<g shape-rendering="crispEdges">
<rect x="501" y="109" width="1" height="577" fill="#ff0000"/>
<rect x="12" y="108" width="979" height="1" fill="#fff"/><rect x="12" y="404" width="979" height="1" fill="#fff"/><rect x="12" y="108" width="1" height="297" fill="#fff"/><rect x="990" y="108" width="1" height="297" fill="#fff"/>
<rect x="12" y="406" width="979" height="1" fill="#fff"/><rect x="12" y="540" width="979" height="1" fill="#fff"/><rect x="12" y="406" width="1" height="135" fill="#fff"/><rect x="990" y="406" width="1" height="135" fill="#fff"/>
<rect x="12" y="542" width="979" height="1" fill="#fff"/><rect x="12" y="685" width="979" height="1" fill="#fff"/><rect x="12" y="542" width="1" height="144" fill="#fff"/><rect x="990" y="542" width="1" height="144" fill="#fff"/>
<rect x="499" y="109" width="5" height="5" fill="#ff0000"/><rect x="500" y="110" width="3" height="3" fill="#fff"/>
<rect x="499" y="400" width="5" height="5" fill="#ff0000"/><rect x="500" y="401" width="3" height="3" fill="#fff"/>
<rect x="13" y="612" width="5" height="5" fill="#ff0000"/><rect x="14" y="613" width="3" height="3" fill="#fff"/>
<rect x="986" y="612" width="5" height="5" fill="#ff0000"/><rect x="987" y="613" width="3" height="3" fill="#fff"/>
<rect x="593" y="403" width="9" height="1" fill="#c0c0c0"/>
<rect x="991" y="134" width="2" height="1" fill="#fff"/>
<rect x="991" y="167" width="2" height="1" fill="#fff"/>
<rect x="991" y="200" width="2" height="1" fill="#fff"/>
<rect x="991" y="232" width="2" height="1" fill="#fff"/>
<rect x="991" y="265" width="2" height="1" fill="#fff"/>
<rect x="991" y="298" width="2" height="1" fill="#fff"/>
<rect x="991" y="331" width="2" height="1" fill="#fff"/>
<rect x="991" y="363" width="2" height="1" fill="#fff"/>
<rect x="991" y="395" width="2" height="1" fill="#fff"/>
<rect x="991" y="458" width="1" height="1" fill="#fff"/>
<rect x="13" y="686" width="1" height="3" fill="#fff"/>
<rect x="77" y="686" width="1" height="3" fill="#fff"/>
<rect x="141" y="686" width="1" height="3" fill="#fff"/>
<rect x="205" y="686" width="1" height="3" fill="#fff"/>
<rect x="269" y="686" width="1" height="3" fill="#fff"/>
<rect x="333" y="686" width="1" height="3" fill="#fff"/>
<rect x="397" y="686" width="1" height="3" fill="#fff"/>
<rect x="461" y="686" width="1" height="3" fill="#fff"/>
<rect x="525" y="686" width="1" height="3" fill="#fff"/>
<rect x="589" y="686" width="1" height="3" fill="#fff"/>
<rect x="653" y="686" width="1" height="3" fill="#fff"/>
<rect x="717" y="686" width="1" height="3" fill="#fff"/>
<rect x="781" y="686" width="1" height="3" fill="#fff"/>
</g>
<polygon points="789,109 799,109 794,114.5" fill="#778899"/>
<path d="M498.5,127.5 H503.5 V134.5 H506.5 L501,139.5 L494.5,134.5 H498.5 Z" fill="#000" stroke="#ff0000" stroke-width="1"/>
<rect x="501" y="127" width="1" height="13" fill="#ff0000"/>
<path d="M245.5,281.5 L250.5,286.5 H247.5 V292.5 H243.5 V286.5 H240.5 Z" fill="none" stroke="#3a8ad0" stroke-width="1"/>
<circle cx="782" cy="255" r="1.6" fill="#ff8c00"/><circle cx="782" cy="268" r="1.6" fill="#00008b"/><circle cx="782" cy="279" r="1.6" fill="#ff0000"/>
<g font-family="'Liberation Sans','DejaVu Sans',sans-serif" stroke="#fff" stroke-width="0.3" text-rendering="geometricPrecision">
<text x="17" y="120" font-size="10" fill="#fff" text-anchor="start" textLength="182" lengthAdjust="spacingAndGlyphs">EURUSD,M5&#160;&#160;1.4269 1.4272 1.4263 1.4263</text>
<text x="74" y="142" font-size="10" fill="#fff" text-anchor="start" textLength="194" lengthAdjust="spacingAndGlyphs">HTTP:// FXSYSTEM-SONI.BLOGSPOT.COM</text>
<text x="38" y="166" font-size="10" fill="#fff" text-anchor="start" textLength="267" lengthAdjust="spacingAndGlyphs">EXIT TARGET: 20 pips: trailing 15 pips; ( save trader rule only )</text>
<text x="30" y="178" font-size="10" fill="#fff" text-anchor="start" textLength="283" lengthAdjust="spacingAndGlyphs">Period 15m, Max. for 30m&#160;&#160;: 50-100 pips; SL 150 pip; Trailing 50 pips</text>
<text x="17" y="420" font-size="10" fill="#fff" text-anchor="start" textLength="144" lengthAdjust="spacingAndGlyphs">MACD(12,26,9) -0.00141 -0.00188</text>
<text x="17" y="556" font-size="10" fill="#fff" text-anchor="start" textLength="70" lengthAdjust="spacingAndGlyphs">MFI(14) 65.6127</text>
<text x="996" y="137" font-size="10" fill="#fff" text-anchor="start" textLength="28" lengthAdjust="spacingAndGlyphs">1.4395</text>
<text x="996" y="170" font-size="10" fill="#fff" text-anchor="start" textLength="28" lengthAdjust="spacingAndGlyphs">1.4375</text>
<text x="996" y="203" font-size="10" fill="#fff" text-anchor="start" textLength="28" lengthAdjust="spacingAndGlyphs">1.4355</text>
<text x="996" y="235" font-size="10" fill="#fff" text-anchor="start" textLength="28" lengthAdjust="spacingAndGlyphs">1.4335</text>
<text x="996" y="268" font-size="10" fill="#fff" text-anchor="start" textLength="28" lengthAdjust="spacingAndGlyphs">1.4315</text>
<text x="996" y="301" font-size="10" fill="#fff" text-anchor="start" textLength="28" lengthAdjust="spacingAndGlyphs">1.4295</text>
<text x="996" y="334" font-size="10" fill="#fff" text-anchor="start" textLength="28" lengthAdjust="spacingAndGlyphs">1.4275</text>
<text x="996" y="366" font-size="10" fill="#fff" text-anchor="start" textLength="28" lengthAdjust="spacingAndGlyphs">1.4255</text>
<text x="996" y="398" font-size="10" fill="#fff" text-anchor="start" textLength="28" lengthAdjust="spacingAndGlyphs">1.4235</text>
<rect x="992" y="344" width="37" height="10" fill="#fff"/>
<text x="996" y="353.2" font-size="10" fill="#000" text-anchor="start" textLength="28" lengthAdjust="spacingAndGlyphs" stroke="#000">1.4263</text>
<text x="994" y="417" font-size="10" fill="#fff" text-anchor="start" textLength="33" lengthAdjust="spacingAndGlyphs">0.00166</text>
<text x="994" y="461" font-size="10" fill="#fff" text-anchor="start" textLength="18" lengthAdjust="spacingAndGlyphs">0.00</text>
<text x="994" y="537" font-size="10" fill="#fff" text-anchor="start" textLength="33" lengthAdjust="spacingAndGlyphs">-0.0027</text>
<text x="994" y="552.7" font-size="10" fill="#fff" text-anchor="start" textLength="15" lengthAdjust="spacingAndGlyphs">100</text>
<text x="994" y="575" font-size="10" fill="#fff" text-anchor="start" textLength="10" lengthAdjust="spacingAndGlyphs">80</text>
<rect x="992" y="608" width="38" height="10" fill="#ff0000"/>
<text x="997" y="617.3" font-size="10" fill="#000" text-anchor="start" textLength="32" lengthAdjust="spacingAndGlyphs" stroke="#000">50.0000</text>
<text x="994" y="659" font-size="10" fill="#fff" text-anchor="start" textLength="10" lengthAdjust="spacingAndGlyphs">20</text>
<text x="994" y="682" font-size="10" fill="#fff" text-anchor="start">0</text>
<text x="12" y="698" font-size="10" fill="#fff" text-anchor="start" textLength="48" lengthAdjust="spacingAndGlyphs">8 Aug 2011</text>
<text x="76" y="698" font-size="10" fill="#fff" text-anchor="start" textLength="51" lengthAdjust="spacingAndGlyphs">8 Aug 06:40</text>
<text x="140" y="698" font-size="10" fill="#fff" text-anchor="start" textLength="51" lengthAdjust="spacingAndGlyphs">8 Aug 07:20</text>
<text x="204" y="698" font-size="10" fill="#fff" text-anchor="start" textLength="51" lengthAdjust="spacingAndGlyphs">8 Aug 08:00</text>
<text x="268" y="698" font-size="10" fill="#fff" text-anchor="start" textLength="51" lengthAdjust="spacingAndGlyphs">8 Aug 08:40</text>
<text x="332" y="698" font-size="10" fill="#fff" text-anchor="start" textLength="51" lengthAdjust="spacingAndGlyphs">8 Aug 09:20</text>
<text x="396" y="698" font-size="10" fill="#fff" text-anchor="start" textLength="51" lengthAdjust="spacingAndGlyphs">8 Aug 10:00</text>
<text x="460" y="698" font-size="10" fill="#fff" text-anchor="start" textLength="51" lengthAdjust="spacingAndGlyphs">8 Aug 10:40</text>
<text x="524" y="698" font-size="10" fill="#fff" text-anchor="start" textLength="51" lengthAdjust="spacingAndGlyphs">8 Aug 11:20</text>
<text x="588" y="698" font-size="10" fill="#fff" text-anchor="start" textLength="51" lengthAdjust="spacingAndGlyphs">8 Aug 12:00</text>
<text x="652" y="698" font-size="10" fill="#fff" text-anchor="start" textLength="51" lengthAdjust="spacingAndGlyphs">8 Aug 12:40</text>
<text x="716" y="698" font-size="10" fill="#fff" text-anchor="start" textLength="51" lengthAdjust="spacingAndGlyphs">8 Aug 13:20</text>
<text x="780" y="698" font-size="10" fill="#fff" text-anchor="start" textLength="51" lengthAdjust="spacingAndGlyphs">8 Aug 14:00</text>
<rect x="461" y="689" width="80" height="10" fill="#ff0000"/>
<text x="466" y="697.7" font-size="10" fill="#000" text-anchor="start" textLength="72" lengthAdjust="spacingAndGlyphs" stroke="#000">2011.08.08 11:05</text>
</g>
<g shape-rendering="crispEdges">
<line x1="21" y1="151.5" x2="320" y2="151.5" stroke="#e8e8e8" stroke-width="1" stroke-dasharray="3,1"/>
<line x1="21" y1="187.5" x2="320" y2="187.5" stroke="#e8e8e8" stroke-width="1" stroke-dasharray="3,1"/>
</g></svg>
<!-- tabs bar -->
<div class="a" style="left:8px;top:703px;width:1024px;height:2px;background:#fff"></div>
<div class="a" style="left:8px;top:705px;width:1024px;height:19px;background:#f0f0f0"></div>
<div class="a" style="left:8px;top:705px;width:1024px;height:1px;background:#101010"></div>
<div class="a" style="left:8px;top:706px;width:1px;height:18px;background:#a0a0a0"></div>
<div class="a" style="left:9px;top:706px;width:1px;height:18px;background:#696969"></div>
<div class="tab" style="left:22px">EURUSD,H1</div><div class="tsep" style="left:92px"></div>
<div class="tab" style="left:102px">NZDUSD,H1</div><div class="tsep" style="left:172px"></div>
<div class="tab" style="left:182px">EURUSD,H1</div><div class="tsep" style="left:252px"></div>
<div class="tab" style="left:262px">USDCHF,H1</div><div class="tsep" style="left:332px"></div>
<div class="tab" style="left:342px">USDCAD,H1</div><div class="tsep" style="left:412px"></div>
<div class="tab" style="left:423px">GBPUSD,H1</div><div class="tsep" style="left:492px"></div>
<div class="tab" style="left:502px">AUDUSD,M5</div>
<div class="a" style="left:572px;top:705px;width:80px;height:19px;background:#fff;border:1px solid #000;border-top:none;box-sizing:border-box;box-shadow:1px 1px 0 #808080"></div>
<div class="tab" style="left:582px;color:#333">EURUSD,M5</div>
<div class="tab" style="left:662px">USDCHF,M5</div><div class="tsep" style="left:732px"></div>
<div class="tab" style="left:742px">XAUUSD,M5</div><div class="tsep" style="left:812px"></div>
<div class="a" style="left:1004px;top:710px;width:0;height:0;border:4px solid transparent;border-right:4px solid #a0a0a0;border-left:none"></div>
<div class="a" style="left:1021px;top:710px;width:0;height:0;border:4px solid transparent;border-left:4px solid #a0a0a0;border-right:none"></div>
<!-- status bar -->
<div class="a" style="left:8px;top:724px;width:1024px;height:14px;background:#f0f0f0"></div>
<div class="a" style="left:8px;top:724px;width:1024px;height:2px;background:#fff"></div>
<div class="a" style="left:0;top:726px;width:1040px;height:11px;overflow:hidden">
 <div class="a tk2" id="stat" style="left:14px;top:4px;font-size:9.5px;line-height:12px;white-space:nowrap;font-family:'DejaVu Sans',sans-serif;color:#000;font-weight:bold;transform:scaleX(0.73);transform-origin:0 0">للمساعدة، إضغط على <span style="font-family:'Liberation Sans',sans-serif;font-size:10.5px;font-weight:normal">F1</span></div>
 <div class="a" style="left:312px;top:4px;font-size:11px;line-height:12px;color:#000">Default</div>
 <div class="a" style="left:935px;top:4px;font-size:11px;line-height:12px;color:#000">428/0 kb</div>
 <div class="a" style="left:306px;top:2px;width:1px;height:10px;background:#a0a0a0"></div>
 <div class="a" style="left:422px;top:2px;width:1px;height:10px;background:#a0a0a0"></div>
 <div class="a" style="left:524px;top:2px;width:1px;height:10px;background:#a0a0a0"></div>
 <div class="a" style="left:595px;top:2px;width:1px;height:10px;background:#a0a0a0"></div>
 <div class="a" style="left:666px;top:2px;width:1px;height:10px;background:#a0a0a0"></div>
 <div class="a" style="left:734px;top:2px;width:1px;height:10px;background:#a0a0a0"></div>
 <div class="a" style="left:804px;top:2px;width:1px;height:10px;background:#a0a0a0"></div>
 <div class="a" style="left:870px;top:2px;width:1px;height:10px;background:#a0a0a0"></div>
 <div class="a" style="left:876px;top:5px;width:14px;height:8px;background:repeating-linear-gradient(to right,#3a7a12 0,#3a7a12 2px,transparent 2px,transparent 3px)"></div>
 <div class="a" style="left:891px;top:5px;width:8px;height:8px;background:repeating-linear-gradient(to right,#a01818 0,#a01818 2px,transparent 2px,transparent 3px)"></div>
 <svg class="a" style="left:1021px;top:1px" width="10" height="10" viewBox="0 0 10 10"><path d="M0,10 L10,0 M4,10 L10,4 M8,10 L10,8" stroke="#a0a0a0" stroke-width="1"/></svg>
</div>
<!-- taskbar -->
<div class="a" style="left:8px;top:737px;width:1024px;height:17px;background:#8299b8"></div>
<div class="a" style="left:8px;top:737px;width:1024px;height:1px;background:#3e4b5e"></div>
<div class="a" style="left:0;top:737px;width:1040px;height:17px;overflow:hidden">
<svg class="a" style="left:16px;top:0" width="40" height="40" viewBox="0 0 44 44"><defs><radialGradient id="orb" cx="50%" cy="30%" r="70%"><stop offset="0" stop-color="#b8c4d6"/><stop offset="0.6" stop-color="#6f7f9a"/><stop offset="1" stop-color="#3a465c"/></radialGradient></defs><circle cx="21" cy="20" r="19" fill="url(#orb)" stroke="#2c3444" stroke-width="1.2"/><path d="M13,9 q4,-3 8,-1 l-1.500,7 q-4,-2 -8,1 Z" fill="#e0662a"/><path d="M22.500,8.500 q4,2 8,-1 l-1.500,7 q-4,3 -8,1 Z" fill="#8aa83a" opacity="0.9"/><path d="M11,17.500 q4,-3 8,-1 l-1.500,7 q-4,-2 -8,1 Z" fill="#2f6fd0"/><path d="M20.500,17 q4,2 8,-1 l-1.500,7 q-4,3 -8,1 Z" fill="#e8b830"/></svg>
<svg class="a" style="left:78px;top:7px" width="18" height="18" viewBox="0 0 18 18"><rect x="1.500" y="1.500" width="15" height="15" fill="#6aa0e0" stroke="#c8d8ee"/><circle cx="9" cy="10" r="6.500" fill="#f08a1a"/><path d="M7,6 V14 L13,10 Z" fill="#fff"/></svg>
<svg class="a" style="left:121px;top:8px" width="20" height="16" viewBox="0 0 20 16"><path d="M1.500,2.500 H7 L8.500,4.500 H17.500 V15 H1.500 Z" fill="#f0d9a0" stroke="#c9a45a"/><rect x="3" y="7" width="13" height="8" fill="#7ab0e0"/><circle cx="3.500" cy="3.600" r="0.800" fill="#2a9a2a"/></svg>
<svg class="a" style="left:164px;top:6px" width="20" height="20" viewBox="0 0 20 20"><circle cx="10" cy="10" r="8.500" fill="#c8ccd4" stroke="#3c4452" stroke-width="1.600"/><circle cx="10" cy="10" r="6" fill="#e8eaee" stroke="#70788a" stroke-width="0.800"/><path d="M9,6 V12 M9,6 L12.500,7.500" stroke="#2a5ac0" stroke-width="1.600" fill="none"/><circle cx="8" cy="12.500" r="1.600" fill="#2a5ac0"/></svg>
<div class="tk" style="left:196px;width:123px;top:2px"><svg class="a" style="left:7px;top:4px" width="18" height="18" viewBox="0 0 18 18"><circle cx="8.500" cy="9" r="6" fill="none" stroke="#2a7ae0" stroke-width="3"/><path d="M1,11 Q9,-1 17,4" stroke="#f0b020" stroke-width="1.800" fill="none"/></svg><span class="a" style="left:36px;top:0;font-family:'DejaVu Sans',sans-serif;font-size:12px">مدونة طريقتي...</span></div>
<div class="tk" style="left:320px;width:121px;top:2px"><svg class="a" style="left:7px;top:4px" width="18" height="18" viewBox="0 0 18 18"><circle cx="8.500" cy="9" r="6" fill="none" stroke="#2a7ae0" stroke-width="3"/><path d="M1,11 Q9,-1 17,4" stroke="#f0b020" stroke-width="1.800" fill="none"/></svg><span class="a" style="left:34px;top:0;font-family:'DejaVu Sans',sans-serif;font-size:12px">نتائج تجاربنا...</span></div>
<div class="tk" style="left:444px;width:122px;top:2px"><svg class="a" style="left:8px;top:5px" width="16" height="14" viewBox="0 0 16 14"><rect x="0.500" y="0.500" width="15" height="13" rx="2" fill="#4a90e0" stroke="#d0e0f4"/><circle cx="5" cy="5" r="2" fill="#fff"/><circle cx="11" cy="5" r="2" fill="#fff"/></svg><span class="a" style="left:29px;top:0">Paltalk Messe...</span></div>
<div class="tk" style="left:568px;width:122px;top:2px"><svg class="a" style="left:8px;top:4px" width="16" height="16" viewBox="0 0 16 16"><circle cx="8" cy="8" r="7" fill="#2a7ad0" stroke="#1a4a90"/><path d="M4,4 q3,2 2,5 q3,1 5,-2 q-1,-4 -4,-5 Z" fill="#4ab04a"/></svg><span class="a" style="left:29px;top:0">Global Tradin...</span></div>
<div class="tk" style="left:692px;width:121px;top:2px;background:linear-gradient(#c4d2e6,#a9bcd8);border-color:#eef3fa"><svg class="a" style="left:9px;top:4px" width="16" height="16" viewBox="0 0 16 16"><circle cx="8" cy="8" r="7" fill="#5c6672" stroke="#333a44"/><path d="M8,3 L13,10.500 H3 Z" fill="#fff"/></svg><span class="a" style="left:29px;top:0">278837: AL Tr...</span></div>
<div class="a" style="left:827px;top:6px;color:#fff;font-size:12px;line-height:14px">EN</div>
<div class="a" style="left:858px;top:13px;width:0;height:0;border:4px solid transparent;border-bottom:5px solid #fff;border-top:none"></div>
<svg class="a" style="left:877px;top:5px" width="16" height="14" viewBox="0 0 16 14"><path d="M1.500,0.500 V14" stroke="#fff" stroke-width="1.600"/><path d="M2.500,1.500 H8 L9,3 H14.500 V10 H2.500 Z" fill="#eef2f8" stroke="#fff"/><circle cx="11" cy="10" r="3" fill="#d03020"/></svg>
<svg class="a" style="left:902px;top:5px" width="16" height="14" viewBox="0 0 16 14"><rect x="1.500" y="3.500" width="12" height="10" rx="1.500" fill="none" stroke="#fff" stroke-width="1.600"/><path d="M5,0.500 V4 M10,0.500 V4" stroke="#fff" stroke-width="1.800"/></svg>
<svg class="a" style="left:931px;top:6px" width="14" height="12" viewBox="0 0 14 12"><path d="M2,12 V8 M5,12 V5 M8,12 V2 M11,12 V0" stroke="#c8d2e0" stroke-width="2"/></svg>
<div class="a" style="left:966px;top:8px;color:#fff;font-size:12px;line-height:14px;white-space:nowrap">02:03 <span style="font-family:'DejaVu Sans',sans-serif;font-size:11px">م</span></div>
<div class="a" style="left:1017px;top:1px;width:15px;height:20px;box-sizing:border-box;border:1px solid #4a5568;background:linear-gradient(135deg,#7a8598,#5a6578)"></div>
</div>

</body></html>
